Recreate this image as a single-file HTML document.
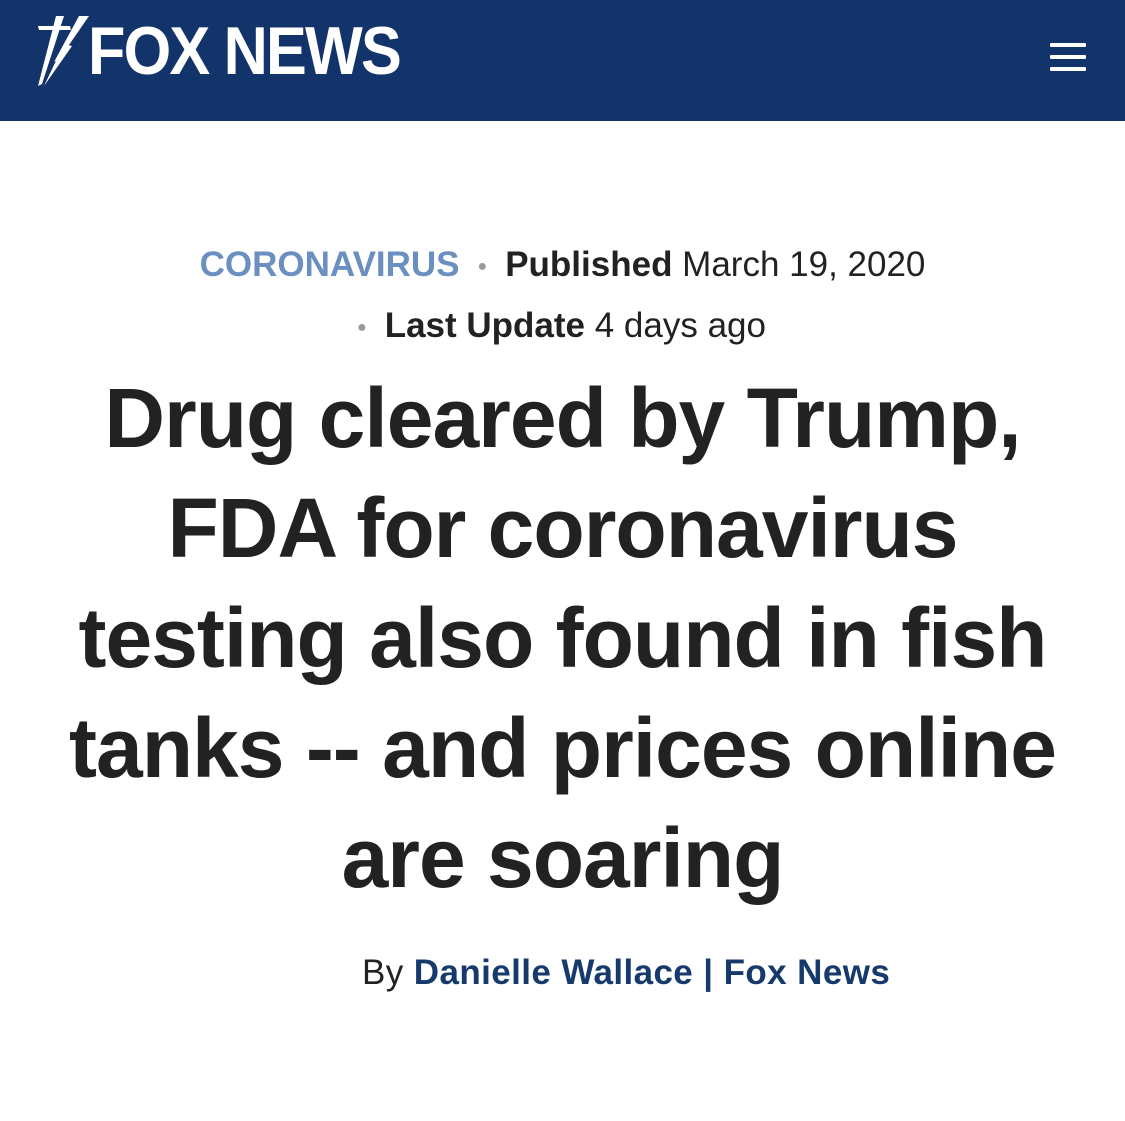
<!DOCTYPE html>
<html><head><style>
body{margin:0;width:1125px;height:1121px;background:#fff;font-family:"Liberation Sans",Arial,sans-serif;position:relative;overflow:hidden}
.hdr{position:absolute;left:0;top:0;width:1125px;height:121px;background:#13346a}
.logo{position:absolute;left:88px;top:12px;color:#fff;font-weight:bold;font-size:68px;letter-spacing:-2px;transform:scaleX(0.9);transform-origin:left top;white-space:nowrap}
.burger{position:absolute;left:1050px;width:36px;height:4px;background:#fff;border-radius:1px}
.meta{position:absolute;left:0;width:1125px;text-align:center;font-size:35px;letter-spacing:0px;color:#222;white-space:nowrap}
.dot{color:#999;font-size:16px;vertical-align:middle;margin:0 18px}
h1{position:absolute;left:0;top:363px;width:1125px;margin:0;text-align:center;font-size:84px;line-height:110px;letter-spacing:-1px;color:#222;font-weight:bold}
.by{position:absolute;left:362px;top:953px;font-size:35px;letter-spacing:0.4px;color:#222;white-space:nowrap}
.by b{color:#163a6b}
</style></head><body>
<div class="hdr">
<svg style="position:absolute;left:34px;top:14px" width="70" height="75" viewBox="0 0 70 75"><path d="M4 12 L36 12 L37 16 L5 16 Z M22 2 L30 2 L8 70 L4 72 Z M45 2 L55 2 L26 44 L20 48 Z M30 30 L38 32 L10 72 Z" fill="#fff"/></svg>
<div class="logo">FOX NEWS</div>
<div class="burger" style="top:43px"></div>
<div class="burger" style="top:55px"></div>
<div class="burger" style="top:67px"></div>
</div>
<div class="meta" style="top:245px"><b style="color:#6a8fc0">CORONAVIRUS</b><span class="dot">●</span><b>Published</b> March 19, 2020</div>
<div class="meta" style="top:306px;left:-10px"><span class="dot">●</span><b>Last Update</b> 4 days ago</div>
<h1>Drug cleared by Trump,<br>FDA for coronavirus<br>testing also found in fish<br>tanks -- and prices online<br>are soaring</h1>
<div class="by">By <b>Danielle Wallace | Fox News</b></div>
</body></html>
